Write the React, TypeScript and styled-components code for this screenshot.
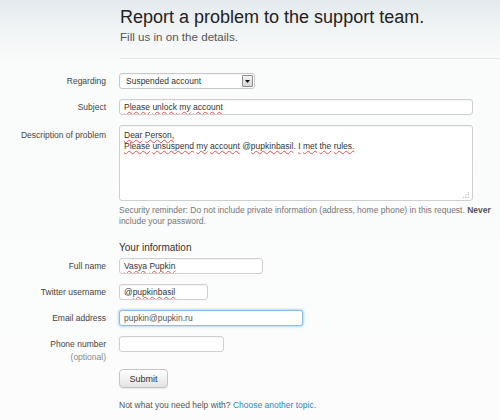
import React from "react";
import styled, { createGlobalStyle } from "styled-components";

const Global = createGlobalStyle`
  html, body {
    margin: 0;
    padding: 0;
  }
  body {
    width: 500px;
    height: 420px;
    overflow: hidden;
    font-family: "Liberation Sans", Arial, sans-serif;
    background: linear-gradient(180deg, #e3e9ee 0px, #f1f4f5 28px, #fafbfb 62px, #fbfcfb 100%);
    color: #333;
  }
`;

const Page = styled.div`
  width: 500px;
  height: 420px;
  display: flex;
  flex-direction: column;
`;

const Header = styled.header`
  margin-left: 120px;
  padding-top: 7px;
`;

const Title = styled.h1`
  margin: 0;
  font-size: 18px;
  line-height: 20px;
  font-weight: normal;
  color: #222;
`;

const Subtitle = styled.p`
  margin: 3px 0 0;
  font-size: 11.6px;
  line-height: 14px;
  color: #555;
`;

const Rule = styled.hr`
  margin: 14px 0 0;
  border: 0;
  height: 1px;
  background: #e6e8e8;
`;

const Form = styled.form`
  margin-top: 14px;
  display: flex;
  flex-direction: column;
`;

const Row = styled.div<{ $mb?: number }>`
  display: flex;
  align-items: flex-start;
  margin-bottom: ${(p) => (p.$mb ?? 10)}px;
`;

const Label = styled.label<{ $pt?: number; $lh?: number }>`
  width: 106px;
  flex: none;
  text-align: right;
  font-size: 8.5px;
  line-height: ${(p) => p.$lh ?? 16}px;
  padding-top: ${(p) => p.$pt ?? 0}px;
  color: #444;
`;

const Optional = styled.span`
  display: block;
  color: #8a8a8a;
`;

const FieldCol = styled.div`
  margin-left: 13px;
  display: flex;
  flex-direction: column;
`;

const Box = styled.div<{ $w: number; $h?: number; $focus?: boolean }>`
  box-sizing: border-box;
  width: ${(p) => p.$w}px;
  height: ${(p) => p.$h ?? 16}px;
  background: #fff;
  border: 1px solid ${(p) => (p.$focus ? "#86bff0" : "#cfcfcf")};
  border-radius: 3px;
  box-shadow: ${(p) =>
    p.$focus ? "0 0 2px 1px rgba(130, 190, 240, 0.55)" : "inset 0 1px 1px rgba(0,0,0,0.04)"};
  font-size: 8.5px;
  line-height: 14px;
  padding: 0 4px;
  color: ${(p) => (p.$focus ? "#555" : "#333")};
  white-space: nowrap;
  overflow: hidden;
`;

const SelectBox = styled(Box)`
  display: flex;
  align-items: center;
  justify-content: space-between;
  padding: 0 1px 0 6px;
  border-color: #c8c8c8;
`;

const ArrowBtn = styled.span`
  box-sizing: border-box;
  width: 11px;
  height: 12px;
  border: 1px solid #8e8e8e;
  border-radius: 1px;
  background: linear-gradient(#f4f4f4, #d6d6d6);
  display: flex;
  align-items: center;
  justify-content: center;
`;

const AreaBox = styled(Box)`
  display: flex;
  flex-direction: column;
  white-space: normal;
  line-height: 11px;
  padding: 4px 3px 2px 4px;
`;

const AreaText = styled.div`
  flex: 1;
`;

const Grip = styled.span`
  align-self: flex-end;
  width: 7px;
  height: 7px;
  background:
    radial-gradient(circle, #aaa 0.7px, transparent 0.9px) 0 0 / 2.5px 2.5px;
  clip-path: polygon(100% 0, 100% 100%, 0 100%);
`;

const Typo = styled.span`
  text-decoration: underline wavy #e85050;
  text-decoration-thickness: 1px;
  text-underline-offset: 1px;
  text-decoration-skip-ink: none;
`;

const Hint = styled.p`
  margin: 4px 0 0;
  font-size: 8.5px;
  line-height: 11px;
  color: #777;
  white-space: nowrap;
  strong {
    color: #555;
  }
`;

const SectionTitle = styled.h2`
  margin: 15px 0 4px 119px;
  font-size: 10px;
  line-height: 12px;
  font-weight: normal;
  color: #333;
`;

const Button = styled.button`
  box-sizing: border-box;
  width: 49px;
  height: 19px;
  padding: 0;
  font-family: "Liberation Sans", Arial, sans-serif;
  font-size: 9px;
  color: #333;
  border: 1px solid #c4c4c4;
  border-radius: 4px;
  background: linear-gradient(#ffffff, #e3e3e3);
  box-shadow: 0 1px 1px rgba(0, 0, 0, 0.08);
`;

const Footer = styled.p`
  margin: 11px 0 0 119px;
  font-size: 8.5px;
  line-height: 12px;
  color: #555;
`;

const Link = styled.a`
  color: #2a8ac4;
  text-decoration: none;
`;

const words = (s: string) =>
  s.split(" ").map((w, i, arr) => (
    <React.Fragment key={i}>
      <Typo>{w}</Typo>
      {i < arr.length - 1 ? " " : ""}
    </React.Fragment>
  ));

export default function App() {
  return (
    <>
      <Global />
      <Page>
        <Header>
          <Title>Report a problem to the support team.</Title>
          <Subtitle>Fill us in on the details.</Subtitle>
          <Rule />
        </Header>
        <Form onSubmit={(e) => e.preventDefault()}>
          <Row>
            <Label>Regarding</Label>
            <FieldCol>
              <SelectBox $w={136}>
                <span>Suspended account</span>
                <ArrowBtn>
                  <svg width="5" height="3" viewBox="0 0 5 3">
                    <path d="M0 0h5L2.5 3z" fill="#111" />
                  </svg>
                </ArrowBtn>
              </SelectBox>
            </FieldCol>
          </Row>
          <Row>
            <Label>Subject</Label>
            <FieldCol>
              <Box $w={354}>{words("Please unlock my account")}</Box>
            </FieldCol>
          </Row>
          <Row $mb={0}>
            <Label $pt={2}>Description of problem</Label>
            <FieldCol>
              <AreaBox $w={354} $h={76}>
                <AreaText>
                  {words("Dear Person,")}
                  <br />
                  {words("Please unsuspend my account")} @<Typo>pupkinbasil</Typo>.{" "}
                  {words("I met the rules.")}
                </AreaText>
                <Grip />
              </AreaBox>
              <Hint>
                Security reminder: Do not include private information (address, home phone) in this
                request. <strong>Never</strong>
                <br />
                include your password.
              </Hint>
            </FieldCol>
          </Row>
          <SectionTitle>Your information</SectionTitle>
          <Row>
            <Label>Full name</Label>
            <FieldCol>
              <Box $w={144}>{words("Vasya Pupkin")}</Box>
            </FieldCol>
          </Row>
          <Row>
            <Label>Twitter username</Label>
            <FieldCol>
              <Box $w={89}>
                {" "}@<Typo>pupkinbasil</Typo>
              </Box>
            </FieldCol>
          </Row>
          <Row>
            <Label>Email address</Label>
            <FieldCol>
              <Box $w={184} $focus>
                pupkin@pupkin.ru
              </Box>
            </FieldCol>
          </Row>
          <Row $mb={5}>
            <Label $pt={2} $lh={13}>
              Phone number
              <Optional>(optional)</Optional>
            </Label>
            <FieldCol>
              <Box $w={105} />
            </FieldCol>
          </Row>
          <Row $mb={0}>
            <Label />
            <FieldCol>
              <Button type="submit">Submit</Button>
            </FieldCol>
          </Row>
          <Footer>
            Not what you need help with? <Link href="#">Choose another topic.</Link>
          </Footer>
        </Form>
      </Page>
    </>
  );
}
